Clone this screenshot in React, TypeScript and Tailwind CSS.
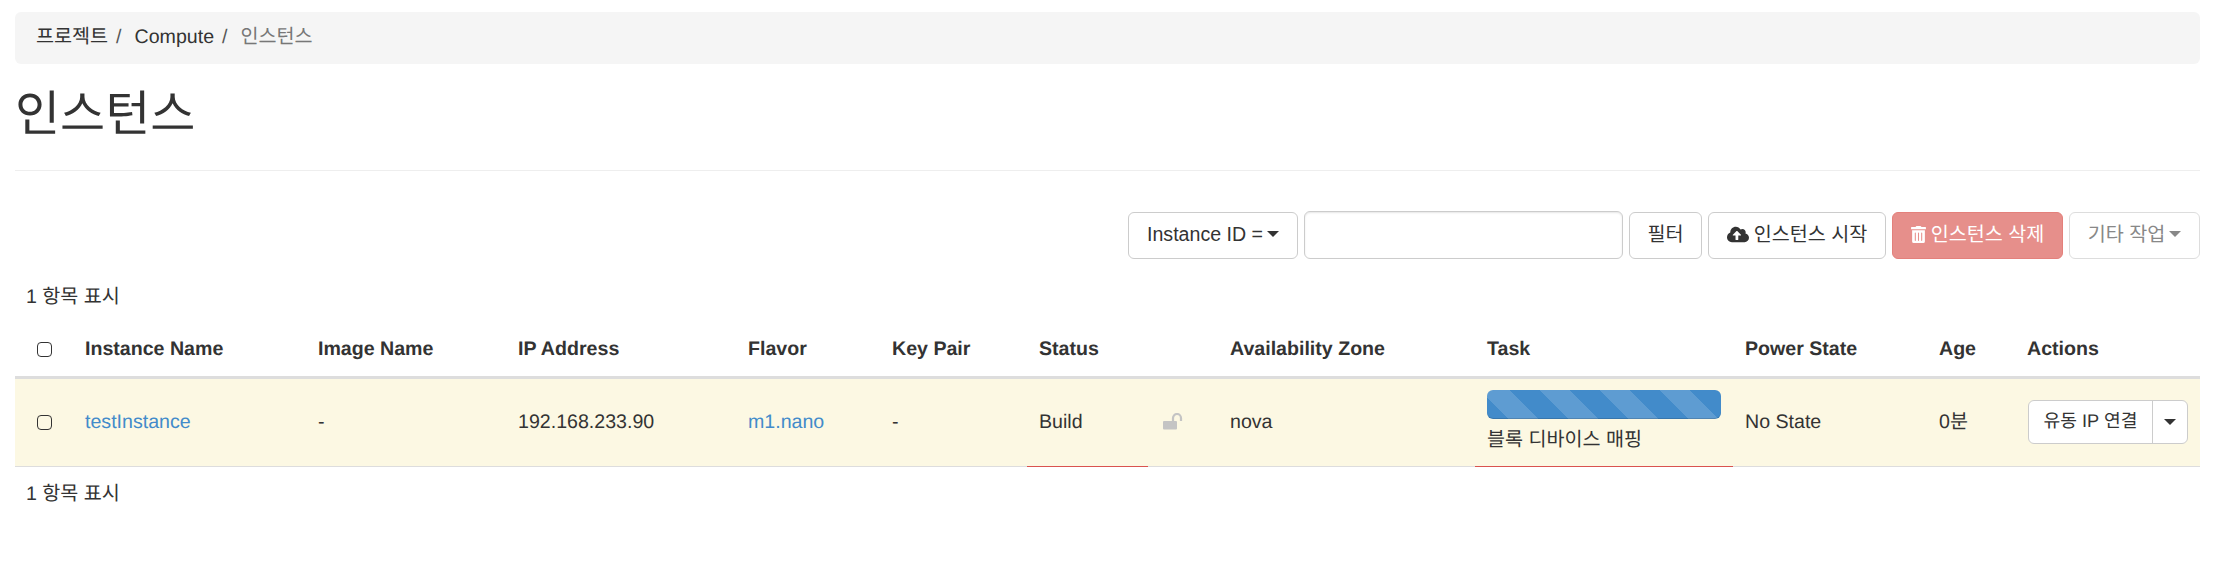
import { FaCloudUploadAlt, FaTrashAlt } from "react-icons/fa";

const FONT = "font-['Liberation_Sans','Noto_Sans_CJK_KR',sans-serif]";

function Caret() {
  return <span className="inline-block align-middle w-0 h-0 border-x-[6.5px] border-x-transparent border-t-[6.5px] border-t-current" />;
}

function Check() {
  return <span className="block mx-auto w-[15px] h-[15px] rounded-[4px] border-[1.5px] border-[#333]" />;
}

function UnlockIcon() {
  return (
    <svg width="20" height="17" viewBox="0 0 20 17" className="block">
      <rect x="0" y="8" width="14" height="8.5" rx="1" fill="#c4c4c4" />
      <path d="M10 8V5a4 4 0 0 1 8 0v3" fill="none" stroke="#c4c4c4" strokeWidth="2.2" />
    </svg>
  );
}

const headers = [
  "Instance Name",
  "Image Name",
  "IP Address",
  "Flavor",
  "Key Pair",
  "Status",
  "",
  "Availability Zone",
  "Task",
  "Power State",
  "Age",
  "Actions",
];

export default function App() {
  return (
    <div className={`${FONT} [text-rendering:geometricPrecision] w-[2218px] h-[582px] bg-white text-[19.6px] leading-[28px] text-[#333] pl-[15px] pr-[18px] pt-[12px] overflow-hidden`}>
      <div className="h-[52px] bg-[#f5f5f5] rounded-[6px] px-[21px] pt-[11px] flex items-start">
        <span>프로젝트</span>
        <span className="pl-[8px] pr-[13px] text-[#555]">/</span>
        <span>Compute</span>
        <span className="pl-[8px] pr-[13px] text-[#555]">/</span>
        <span className="text-[#777]">인스턴스</span>
      </div>

      <div className="h-[107px] border-b border-[#eee] pt-[21px]">
        <h1 className="text-[49px] leading-[60px] font-normal">인스턴스</h1>
      </div>

      <div className="flex justify-end gap-[6px] mt-[40px] h-[48px] items-end">
        <button className="w-[170px] h-[47px] pb-[3px] rounded-[6px] border border-[#ccc] bg-white flex items-center justify-center gap-[4px]">
          Instance ID =<Caret />
        </button>
        <input className="w-[319px] h-[48px] rounded-[6px] border border-[#ccc] shadow-[inset_0_1px_2px_rgba(0,0,0,0.1)] bg-white" />
        <button className="w-[73px] h-[47px] pb-[3px] rounded-[6px] border border-[#ccc] bg-white">필터</button>
        <button className="w-[178px] h-[47px] pb-[3px] rounded-[6px] border border-[#ccc] bg-white flex items-center justify-center gap-[5px]">
          <FaCloudUploadAlt className="w-[22px] h-[21px] text-[#333]" />
          인스턴스 시작
        </button>
        <button className="w-[171px] h-[47px] pb-[3px] rounded-[6px] border border-[#e4807b] bg-[#e68f8b] text-white flex items-center justify-center gap-[5px]">
          <FaTrashAlt className="w-[15px] h-[17px]" />
          인스턴스 삭제
        </button>
        <button className="w-[131px] h-[47px] pb-[3px] rounded-[6px] border border-[#ddd] bg-white text-[#888] flex items-center justify-center gap-[4px]">
          기타 작업<Caret />
        </button>
      </div>

      <div className="pl-[11px] mt-[24px] h-[28px]">1 항목 표시</div>

      <table className="w-[2185px] table-fixed border-collapse mt-[10px]">
        <colgroup>
          <col className="w-[58px]" />
          <col className="w-[233px]" />
          <col className="w-[200px]" />
          <col className="w-[230px]" />
          <col className="w-[144px]" />
          <col className="w-[147px]" />
          <col className="w-[121px]" />
          <col className="w-[70px]" />
          <col className="w-[257px]" />
          <col className="w-[258px]" />
          <col className="w-[194px]" />
          <col className="w-[88px]" />
          <col className="w-[185px]" />
        </colgroup>
        <thead>
          <tr className="h-[56px] border-b-[3px] border-[#ddd]">
            <th className="p-0 pt-[2px]"><Check /></th>
            {headers.map((h, i) => (
              <th key={i} className="px-[12px] pt-[2px] text-left font-bold">{h}</th>
            ))}
          </tr>
        </thead>
        <tbody>
          <tr className="h-[89px] bg-[#fcf8e3] border-b border-[#ddd]">
            <td className="p-0"><Check /></td>
            <td className="px-[12px] text-[#428bca]">testInstance</td>
            <td className="px-[12px]">-</td>
            <td className="px-[12px]">192.168.233.90</td>
            <td className="px-[12px] text-[#428bca]">m1.nano</td>
            <td className="px-[12px]">-</td>
            <td className="px-[12px] border-b border-[#d9534f]">Build</td>
            <td className="pl-[15px] pb-[2px]"><UnlockIcon /></td>
            <td className="px-[12px]">nova</td>
            <td className="px-[12px] border-b border-[#d9534f]">
              <div className="h-[29px] rounded-[6px] bg-[#428bca] bg-[linear-gradient(45deg,rgba(255,255,255,0.15)_25%,transparent_25%,transparent_50%,rgba(255,255,255,0.15)_50%,rgba(255,255,255,0.15)_75%,transparent_75%,transparent)] bg-[length:60px_60px] bg-[position:-7px_0] shadow-[inset_0_-1px_0_rgba(0,0,0,0.15)]" />
              <div className="mt-[7px]">블록 디바이스 매핑</div>
            </td>
            <td className="px-[12px]">No State</td>
            <td className="px-[12px]">0분</td>
            <td className="pl-[13px] pr-[12px]">
              <div className="flex h-[44px] w-[160px] rounded-[6px] border border-[#ccc] bg-white text-[18.2px]">
                <span className="w-[124px] pb-[2px] flex items-center justify-center border-r border-[#ccc]">유동 IP 연결</span>
                <span className="flex-1 flex items-center justify-center"><Caret /></span>
              </div>
            </td>
          </tr>
        </tbody>
      </table>

      <div className="pl-[11px] mt-[13px]">1 항목 표시</div>
    </div>
  );
}
